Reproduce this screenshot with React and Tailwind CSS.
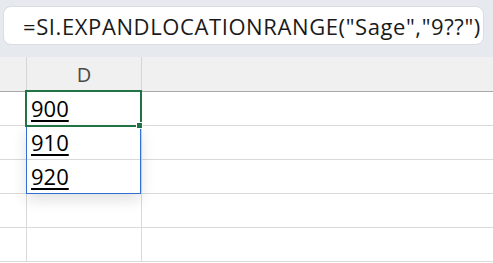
import React from "react";

const rows = [
  { value: "900" },
  { value: "910" },
  { value: "920" },
  { value: "" },
  { value: "" },
];

function App() {
  return (
    <div
      className="relative w-[493px] h-[263px] overflow-hidden bg-white"
      style={{ fontFamily: '"Open Sans", "Noto Sans", sans-serif' }}
    >
      {/* formula bar */}
      <div className="h-[57px] bg-[#e6e9ee] pt-[6px] pl-[3px]">
        <div className="flex items-center h-[39px] w-[481px] rounded-lg border border-[#d9dce1] bg-white pl-[19px] pt-[2px] text-[22px] tracking-[0.6px] text-[#1a1a1a] whitespace-nowrap">
          =SI.EXPANDLOCATIONRANGE("Sage","9??")
        </div>
      </div>

      {/* column header */}
      <div className="flex h-[35px] bg-[#f0f0f0] border-b border-[#a9a9a9]">
        <div className="w-[27px] border-r border-[#d6d6d6]" />
        <div className="flex w-[115px] items-center justify-center border-r border-[#d6d6d6] pt-[2px] text-[20px] text-[#4a4a4a]">
          D
        </div>
        <div className="flex-1" />
      </div>

      {/* grid */}
      <div>
        {rows.map((r, i) => (
          <div key={i} className="flex h-[34px] border-b border-[#dadada]">
            <div className="w-[27px] border-r border-[#dadada]" />
            <div className="flex w-[115px] items-center border-r border-[#dadada] pl-[4px] text-[22px] text-black">
              {r.value && (
                <span className="underline decoration-2 underline-offset-[3px]">{r.value}</span>
              )}
            </div>
            <div className="flex-1" />
          </div>
        ))}
      </div>

      {/* spill range + active cell */}
      <div className="absolute left-[26px] top-[126px] w-[115px] h-[68px] border border-[#2f6fd6] shadow-[0_6px_14px_rgba(0,0,0,0.12)]" />
      <div className="absolute left-[25px] top-[90px] w-[117px] h-[37px] border-2 border-[#217346]" />
      <div className="absolute left-[136px] top-[122px] w-[7px] h-[7px] bg-[#217346] border border-white" />
    </div>
  );
}

export default App;
